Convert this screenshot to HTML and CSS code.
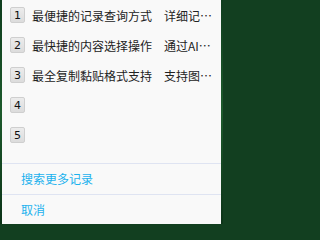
FILE: index.html
```html
<!DOCTYPE html>
<html lang="zh-CN">
<head>
<meta charset="utf-8">
<title>记录选择</title>
<link rel="stylesheet" href="styles.css">
</head>
<body>
<div class="panel">
  <ul class="list">
    <li class="row"><span class="badge">1</span><span class="title">最便捷的记录查询方式</span><span class="desc">详细记…</span></li>
    <li class="row"><span class="badge">2</span><span class="title">最快捷的内容选择操作</span><span class="desc">通过AI…</span></li>
    <li class="row"><span class="badge">3</span><span class="title">最全复制黏贴格式支持</span><span class="desc">支持图…</span></li>
    <li class="row"><span class="badge">4</span></li>
    <li class="row"><span class="badge">5</span></li>
  </ul>
  <div class="action more">搜索更多记录</div>
  <div class="action cancel">取消</div>
</div>
</body>
</html>
```
FILE: styles.css
```css
html, body {
  margin: 0;
  padding: 0;
}
html {
  background: #123f20;
}
body {
  width: 223px;
  height: 224px;
  background: linear-gradient(180deg, #0f3d1e 0%, #1d5a2c 50%, #0c3318 100%);
  display: flex;
  font-family: "Noto Sans CJK SC", "Noto Sans", sans-serif;
  font-size: 12px;
  color: #222;
}
.panel {
  margin: 0 2px 0 2px;
  flex: 1;
  background: #f9f9f9;
  display: flex;
  flex-direction: column;
}
.list {
  list-style: none;
  margin: 0;
  padding: 0 0 13px 0;
}
.row {
  height: 30px;
  display: flex;
  align-items: center;
  padding-left: 8px;
}
.badge {
  width: 13px;
  height: 14px;
  border: 1px solid #cfcfcf;
  border-radius: 2px;
  background: linear-gradient(180deg, #ececec, #dcdcdc);
  display: flex;
  align-items: center;
  justify-content: center;
  font-family: "DejaVu Sans", sans-serif;
  font-size: 11px;
  color: #111;
  flex: none;
}
.title {
  margin-left: 7px;
  width: 132px;
  white-space: nowrap;
  flex: none;
}
.desc {
  white-space: nowrap;
  flex: none;
}
.action {
  height: 30px;
  display: flex;
  align-items: center;
  padding-left: 19px;
  color: #1cb2ee;
  border-top: 1px solid #dfe4f2;
}
```
